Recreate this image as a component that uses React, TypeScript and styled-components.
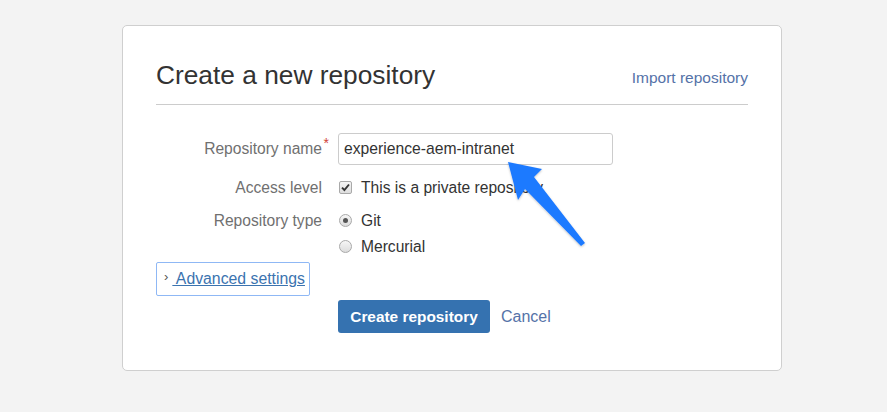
import React from "react";
import styled, { createGlobalStyle } from "styled-components";

const Global = createGlobalStyle`
  html, body { margin: 0; padding: 0; background: #f3f3f3; }
  body { font-family: "Liberation Sans", Arial, sans-serif; }
`;

const Page = styled.div`
  width: 887px;
  height: 412px;
  padding: 25px 0 0 122px;
  box-sizing: border-box;
  position: relative;
  overflow: hidden;
`;

const Card = styled.div`
  width: 660px;
  height: 346px;
  box-sizing: border-box;
  background: #fff;
  border: 1px solid #cfcfcf;
  border-radius: 5px;
  padding: 0 33px;
`;

const Header = styled.div`
  display: flex;
  align-items: baseline;
  justify-content: space-between;
  padding-top: 33px;
  height: 45px;
  border-bottom: 1px solid #cccccc;
`;

const Title = styled.h1`
  margin: 0;
  font-weight: normal;
  font-size: 26.3px;
  color: #333333;
  line-height: 32px;
`;

const HeaderLink = styled.a`
  font-size: 15.5px;
  color: #5572a8;
  text-decoration: none;
  position: relative;
  top: -1px;
`;

const Form = styled.div`
  padding-top: 28px;
  display: flex;
  flex-direction: column;
`;

const Row = styled.div<{ $h: number }>`
  display: grid;
  grid-template-columns: 166px 1fr;
  column-gap: 16px;
  align-items: center;
  height: ${(p) => p.$h}px;
`;

const Label = styled.label`
  text-align: right;
  font-size: 15.6px;
  color: #707070;
  position: relative;
  white-space: nowrap;
`;

const Req = styled.span`
  color: #d04437;
  position: absolute;
  right: -7px;
  top: -5px;
  font-size: 14px;
`;

const Input = styled.div`
  width: 275px;
  height: 32px;
  box-sizing: border-box;
  border: 1px solid #cccccc;
  border-radius: 3px;
  padding: 0 5px;
  display: flex;
  align-items: center;
  font-size: 15.7px;
  color: #333;
`;

const Option = styled.div`
  display: flex;
  align-items: center;
  gap: 9px;
  font-size: 15.6px;
  color: #333;
`;

const Box = styled.span`
  width: 11px;
  height: 11px;
  border: 1px solid #a9a9a9;
  border-radius: 2px;
  background: linear-gradient(#f4f4f4, #dedede);
  display: inline-flex;
  align-items: center;
  justify-content: center;
  margin-left: 1px;
`;

const Radio = styled.span<{ $on?: boolean }>`
  width: 11px;
  height: 11px;
  border: 1px solid #a9a9a9;
  border-radius: 50%;
  background: linear-gradient(#f6f6f6, #dcdcdc);
  display: inline-flex;
  align-items: center;
  justify-content: center;
  margin-left: 1px;
  &::after {
    content: "";
    width: 5px;
    height: 5px;
    border-radius: 50%;
    background: ${(p) => (p.$on ? "#555" : "transparent")};
  }
`;

const Advanced = styled.div`
  width: 154px;
  height: 34px;
  box-sizing: border-box;
  border: 1px solid #8fb8f5;
  border-radius: 2px;
  display: flex;
  align-items: center;
  padding-left: 7px;
  font-size: 15.8px;
`;

const Chevron = styled.span`
  color: #555;
  font-size: 13px;
  margin-right: 4px;
  position: relative;
  top: -3px;
`;

const AdvLink = styled.a`
  color: #3b73af;
  text-decoration: underline;
  white-space: pre;
`;

const Actions = styled.div`
  margin-top: 4px;
  padding-left: 182px;
  display: flex;
  align-items: center;
  gap: 11px;
`;

const Primary = styled.button`
  height: 33px;
  width: 152px;
  border: none;
  border-radius: 3px;
  background: #3572b0;
  color: #fff;
  font-family: "Liberation Sans", Arial, sans-serif;
  font-weight: bold;
  font-size: 15.4px;
  padding: 0;
`;

const Cancel = styled.a`
  font-size: 16px;
  color: #5572a8;
`;

const Arrow = styled.svg`
  position: absolute;
  left: 0;
  top: 0;
  pointer-events: none;
`;

export default function App() {
  return (
    <>
      <Global />
      <Page>
        <Card>
          <Header>
            <Title>Create a new repository</Title>
            <HeaderLink>Import repository</HeaderLink>
          </Header>
          <Form>
            <Row $h={32}>
              <Label>
                Repository name<Req>*</Req>
              </Label>
              <Input>experience-aem-intranet</Input>
            </Row>
            <Row $h={45}>
              <Label>Access level</Label>
              <Option>
                <Box>
                  <svg width="9" height="9" viewBox="0 0 9 9">
                    <path d="M1 4.6 L3.4 7 L8 1.5" stroke="#333" strokeWidth="1.9" fill="none" />
                  </svg>
                </Box>
                This is a private repository
              </Option>
            </Row>
            <Row $h={21}>
              <Label>Repository type</Label>
              <Option>
                <Radio $on />
                Git
              </Option>
            </Row>
            <Row $h={31}>
              <span />
              <Option>
                <Radio />
                Mercurial
              </Option>
            </Row>
            <Advanced>
              <Chevron>&#x203A;</Chevron>
              <AdvLink> Advanced settings</AdvLink>
            </Advanced>
            <Actions>
              <Primary>Create repository</Primary>
              <Cancel>Cancel</Cancel>
            </Actions>
          </Form>
        </Card>
        <Arrow width="887" height="412" viewBox="0 0 887 412">
          <defs>
            <filter id="sh" x="-20%" y="-20%" width="140%" height="140%">
              <feDropShadow dx="0" dy="1" stdDeviation="1" floodColor="#000" floodOpacity="0.25" />
            </filter>
          </defs>
          <path
            d="M508 162 L542 169 L534 177 L585 243 L581 246 L525 189 L518 200 Z"
            fill="#1e7aff"
            filter="url(#sh)"
          />
        </Arrow>
      </Page>
    </>
  );
}
